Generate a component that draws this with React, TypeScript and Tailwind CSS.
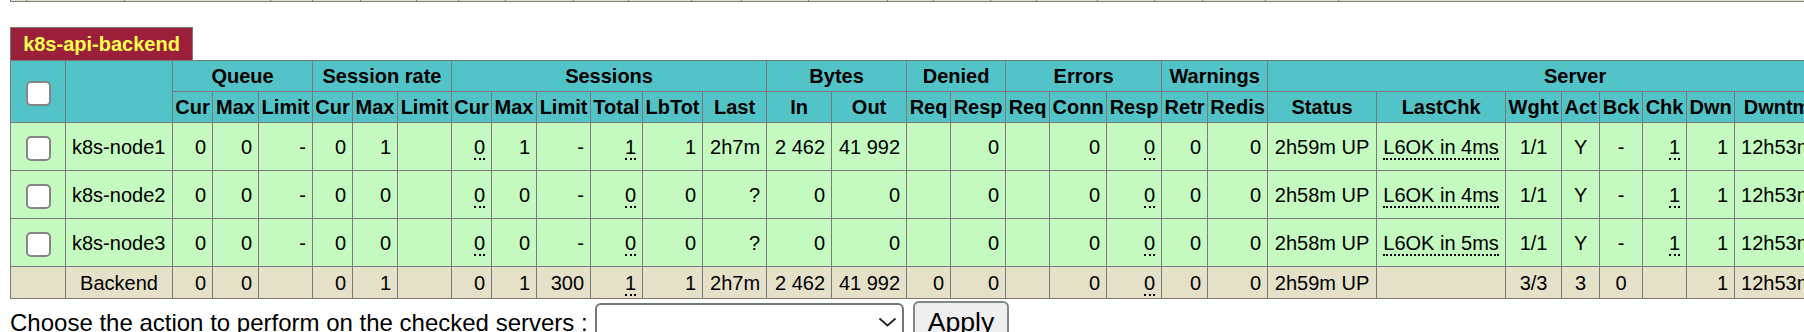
import clsx from "clsx";

// column widths of the stats table (border to border)
const COLS = [
  "w-[55px]", "w-[107px]",
  "w-[40px]", "w-[46px]", "w-[54px]",
  "w-[40px]", "w-[45px]", "w-[54px]",
  "w-[40px]", "w-[45px]", "w-[54px]", "w-[52px]", "w-[60px]", "w-[64px]",
  "w-[65px]", "w-[75px]",
  "w-[44px]", "w-[55px]",
  "w-[44px]", "w-[57px]", "w-[55px]",
  "w-[46px]", "w-[60px]",
  "w-[109px]", "w-[129px]", "w-[56px]", "w-[38px]", "w-[43px]", "w-[44px]", "w-[48px]", "w-[85px]", "w-[63px]",
];

// bottom of the proxy table above, only a sliver is visible
const PREV = [
  "w-[16px]", "w-[98px]", "w-[146px]", "w-[42px]", "w-[48px]", "w-[56px]", "w-[42px]", "w-[47px]",
  "w-[68px]", "w-[55px]", "w-[63px]", "w-[50px]", "w-[67px]", "w-[79px]", "w-[46px]", "w-[57px]",
  "w-[46px]", "w-[61px]", "w-[57px]", "w-[48px]", "w-[63px]", "w-[73px]", "w-[480px]",
];

const GROUPS: [string, number][] = [
  ["Queue", 3],
  ["Session rate", 3],
  ["Sessions", 6],
  ["Bytes", 2],
  ["Denied", 2],
  ["Errors", 3],
  ["Warnings", 2],
  ["Server", 9],
];

const SUB = [
  "Cur", "Max", "Limit",
  "Cur", "Max", "Limit",
  "Cur", "Max", "Limit", "Total", "LbTot", "Last",
  "In", "Out",
  "Req", "Resp",
  "Req", "Conn", "Resp",
  "Retr", "Redis",
  "Status", "LastChk", "Wght", "Act", "Bck", "Chk", "Dwn", "Dwntm", "Thrtle",
];

// "^" centred, "_" dotted underline, default right aligned
const SERVERS = [
  ["k8s-node1", "0", "0", "-", "0", "1", "", "_0", "1", "-", "_1", "1", "2h7m", "2 462", "41 992", "", "0", "", "0", "_0", "0", "0", "^2h59m UP", "^_L6OK in 4ms", "^1/1", "^Y", "^-", "_1", "1", "12h53m", "^-"],
  ["k8s-node2", "0", "0", "-", "0", "0", "", "_0", "0", "-", "_0", "0", "?", "0", "0", "", "0", "", "0", "_0", "0", "0", "^2h58m UP", "^_L6OK in 4ms", "^1/1", "^Y", "^-", "_1", "1", "12h53m", "^-"],
  ["k8s-node3", "0", "0", "-", "0", "0", "", "_0", "0", "-", "_0", "0", "?", "0", "0", "", "0", "", "0", "_0", "0", "0", "^2h58m UP", "^_L6OK in 5ms", "^1/1", "^Y", "^-", "_1", "1", "12h53m", "^-"],
];

const BACKEND = ["0", "0", "", "0", "1", "", "0", "1", "300", "_1", "1", "2h7m", "2 462", "41 992", "0", "0", "", "0", "_0", "0", "0", "^2h59m UP", "", "^3/3", "^3", "^0", "", "1", "12h53m", ""];

const Box = () => (
  <span className="inline-block w-[25px] h-[25px] align-middle rounded-[5px] border-2 border-[#858585] bg-white" />
);

const Cell = ({ raw }: { raw: string }) => {
  let v = raw;
  let center = false;
  if (v.startsWith("^")) {
    center = true;
    v = v.slice(1);
  }
  const dotted = v.startsWith("_");
  if (dotted) v = v.slice(1);
  return (
    <td
      className={clsx(
        "border border-[#7a7a7a] px-[6px] py-0 whitespace-nowrap overflow-hidden",
        center ? "text-center" : "text-right"
      )}
    >
      {dotted ? <span className="border-b-2 border-dotted border-black">{v}</span> : v}
    </td>
  );
};

const App = () => {
  return (
    <div className="w-[1804px] h-[332px] overflow-hidden bg-white text-black [font-family:'Liberation_Sans',Arial,sans-serif]">
      <div className="flex ml-[10px]">
        {PREV.map((w, i) => (
          <div key={i} className={clsx("shrink-0 h-[2px] border-l border-b border-[#7a7a7a] bg-[#e5e1c9]", w)} />
        ))}
      </div>

      <div className="ml-[10px] mt-[25px] w-[183px] h-[33px] flex items-center justify-center border border-b-0 border-[#7a7a7a] bg-[#9b1f3a] text-[#ffff50] text-[20px] font-bold whitespace-nowrap">
        k8s-api-backend
      </div>

      <table className="ml-[10px] w-[1872px] table-fixed border-collapse text-[20px]">
        <colgroup>
          {COLS.map((w, i) => (
            <col key={i} className={w} />
          ))}
        </colgroup>
        <thead>
          <tr className="h-[30px] bg-[#52c4c8]">
            <th rowSpan={2} className="border border-[#7a7a7a] text-center">
              <Box />
            </th>
            <th rowSpan={2} className="border border-[#7a7a7a]" />
            {GROUPS.map(([label, span]) => (
              <th key={label} colSpan={span} className="border border-[#7a7a7a] font-bold text-center whitespace-nowrap">
                {label}
              </th>
            ))}
          </tr>
          <tr className="h-[28px] bg-[#52c4c8]">
            {SUB.map((label, i) => (
              <th key={i} className="border border-[#7a7a7a] px-[2px] font-bold text-center whitespace-nowrap overflow-hidden">
                {label}
              </th>
            ))}
          </tr>
        </thead>
        <tbody>
          {SERVERS.map((row) => (
            <tr key={row[0]} className="h-[48px] bg-[#c4f9c0]">
              <td className="border border-[#7a7a7a] text-center">
                <Box />
              </td>
              <td className="border border-[#7a7a7a] px-[6px] text-left whitespace-nowrap">{row[0]}</td>
              {row.slice(1).map((v, i) => (
                <Cell key={i} raw={v} />
              ))}
            </tr>
          ))}
          <tr className="h-[32px] bg-[#e5e1c9]">
            <td className="border border-[#7a7a7a]" />
            <td className="border border-[#7a7a7a] px-[6px] text-center">Backend</td>
            {BACKEND.map((v, i) => (
              <Cell key={i} raw={v} />
            ))}
          </tr>
        </tbody>
      </table>

      <div className="flex items-start ml-[10px] mt-[2px]">
        <span className="mt-[8px] text-[24px] leading-[28px] whitespace-nowrap">
          Choose the action to perform on the checked servers :
        </span>
        <div className="relative ml-[7px] mt-[2px] w-[309px] h-[40px] rounded-[6px] border-2 border-[#767676] bg-white">
          <svg className="absolute right-[5px] top-[12px]" width="19" height="10" viewBox="0 0 19 10" fill="none">
            <path d="M1.5 1.5 L9.5 8.5 L17.5 1.5" stroke="#222" strokeWidth="1.8" />
          </svg>
        </div>
        <button className="ml-[9px] h-[42px] px-[13px] rounded-[6px] border-2 border-[#858585] bg-[#efefef] text-[26.67px] leading-none">
          Apply
        </button>
      </div>
    </div>
  );
};

export default App;
